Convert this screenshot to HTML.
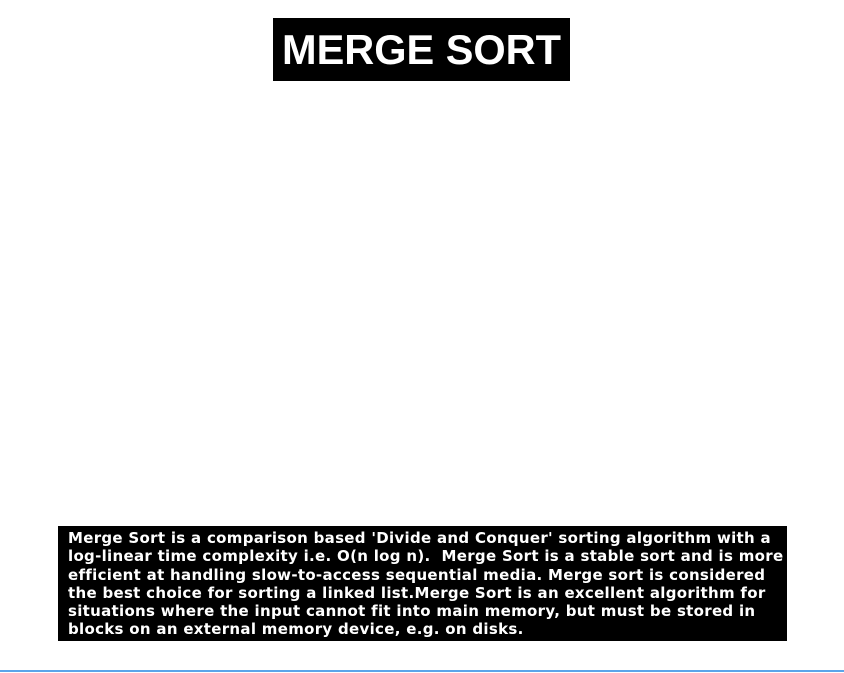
<!DOCTYPE html>
<html><head><meta charset="utf-8"><style>
html,body{margin:0;padding:0;background:#fff;width:844px;height:673px;overflow:hidden;position:relative}
.t{position:absolute;left:273px;top:18px;width:297px;height:63px;background:#000;color:#fff;font-family:"Liberation Sans",sans-serif;font-weight:bold;font-size:41.5px;line-height:63px;text-align:center}
.p{position:absolute;left:58px;top:526px;width:729px;height:115px;background:#000;color:#fff;font-family:"DejaVu Sans",sans-serif;font-weight:bold;font-size:15px;line-height:18.3px;padding:3px 0 0 10px;box-sizing:border-box;white-space:nowrap;letter-spacing:0.3px}
.l{position:absolute;left:0;top:670px;width:844px;height:2px;background:#5aa5ea}
</style></head><body>
<div class="t">MERGE SORT</div>
<div class="p">Merge Sort is a comparison based 'Divide and Conquer' sorting algorithm with a<br>log-linear time complexity i.e. O(n log n).&nbsp; Merge Sort is a stable sort and is more<br>efficient at handling slow-to-access sequential media. Merge sort is considered<br>the best choice for sorting a linked list.Merge Sort is an excellent algorithm for<br>situations where the input cannot fit into main memory, but must be stored in<br>blocks on an external memory device, e.g. on disks.</div>
<div class="l"></div>
</body></html>
